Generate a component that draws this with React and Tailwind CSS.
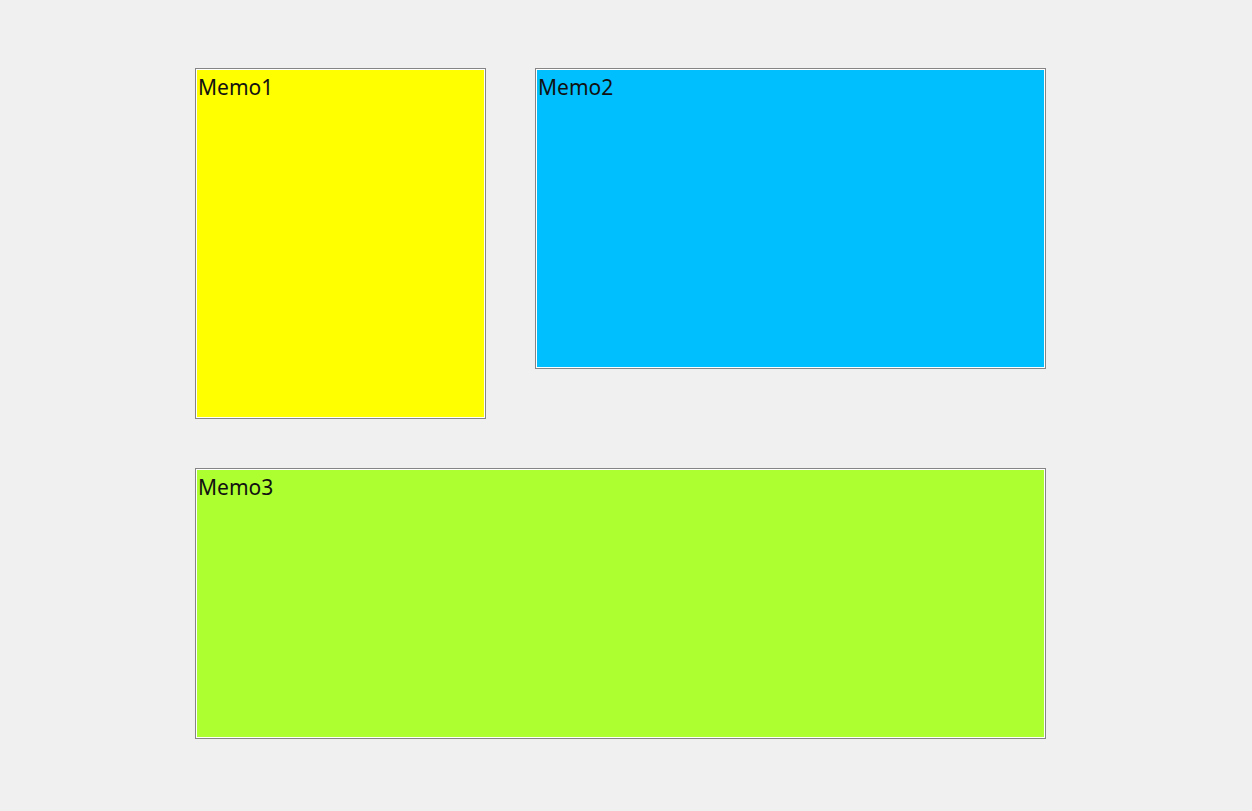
export default function App() {
  const box = "border border-[#858585] bg-white p-px";
  const label = "text-[21px] leading-[28px] text-[#111] font-['Noto_Sans','Open_Sans',sans-serif] pl-px pt-[3px]";
  return (
    <div className="w-[1252px] h-[811px] bg-[#f0f0f0] pt-[68px] pl-[195px]">
      <div className="flex gap-[49px] items-start">
        <div className={`${box} w-[291px] h-[351px]`}>
          <div className="w-full h-full bg-[#ffff00]"><div className={label}>Memo1</div></div>
        </div>
        <div className={`${box} w-[511px] h-[301px]`}>
          <div className="w-full h-full bg-[#00bfff]"><div className={label}>Memo2</div></div>
        </div>
      </div>
      <div className={`${box} w-[851px] h-[271px] mt-[49px]`}>
        <div className="w-full h-full bg-[#adff2f]"><div className={label}>Memo3</div></div>
      </div>
    </div>
  );
}
